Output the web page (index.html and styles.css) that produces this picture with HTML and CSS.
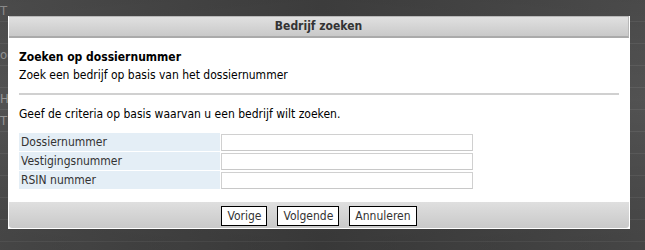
FILE: index.html
```html
<!DOCTYPE html>
<html lang="nl">
<head>
    <meta charset="UTF-8">
    <meta name="viewport" content="width=device-width, initial-scale=1.0">
    <title>Bedrijf zoeken</title>
    <link rel="stylesheet" href="styles.css">
</head>

<body>
    <div class="page">
        <div class="pagerow">T</div>
        <div class="pagerow"></div>
        <div class="pagerow">og</div>
        <div class="pagerow"></div>
        <div class="pagerow">H</div>
        <div class="pagerow">T</div>
        <div class="pagerow"></div>
        <div class="pagerow"></div>
        <div class="pagerow"></div>
        <div class="pagerow"></div>
        <div class="pagerow"></div>
    </div>
    <div class="overlay"></div>

    <div class="dialog">
        <div class="dialog-title">Bedrijf zoeken</div>
        <div class="dialog-body">
            <div class="step-title">Zoeken op dossiernummer</div>
            <div class="step-sub">Zoek een bedrijf op basis van het dossiernummer</div>
            <hr class="sep">
            <p class="intro">Geef de criteria op basis waarvan u een bedrijf wilt zoeken.</p>
            <table class="criteria">
                <tr>
                    <td class="lbl">Dossiernummer</td>
                    <td class="fld"><input type="text"></td>
                </tr>
                <tr>
                    <td class="lbl">Vestigingsnummer</td>
                    <td class="fld"><input type="text"></td>
                </tr>
                <tr>
                    <td class="lbl">RSIN nummer</td>
                    <td class="fld"><input type="text"></td>
                </tr>
            </table>
        </div>
        <div class="dialog-buttons">
            <button>Vorige</button>
            <button>Volgende</button>
            <button>Annuleren</button>
        </div>
    </div>
</body>
</html>
```

FILE: styles.css
```css
html, body {
    margin: 0;
    padding: 0;
    height: 100%;
    overflow: hidden;
}

body {
    font-family: "DejaVu Sans Condensed", "DejaVu Sans", sans-serif;
    font-size: 12px;
    background: #4c4c4c;
}

.page {
    height: 250px;
    overflow: hidden;
}

.pagerow {
    height: 21px;
    line-height: 21px;
    border-bottom: 1px solid #5a5a5a;
    color: #9a9a9a;
    font-size: 13px;
}

.overlay {
    position: absolute;
    top: 0;
    left: 0;
    right: 0;
    bottom: 0;
    background: linear-gradient(to bottom, rgba(0, 0, 0, 0.15) 0%, rgba(0, 0, 0, 0.05) 40%, rgba(0, 0, 0, 0.2) 95%),
                linear-gradient(to right, rgba(255, 255, 255, 0.06), rgba(0, 0, 0, 0.08) 50%, rgba(255, 255, 255, 0.06));
}

.dialog {
    position: absolute;
    left: 8px;
    top: 16px;
    width: 620px;
    background: #fff;
    border: 1px solid #fff;
    border-top: none;
}

.dialog-title {
    height: 19px;
    line-height: 19px;
    text-align: center;
    font-weight: bold;
    color: #333;
    background: linear-gradient(to bottom, #e0e0e0, #c9c9c9);
    border-top: 1px solid #b8b8b8;
    border-right: 1px solid #b8b8b8;
    border-bottom: 2px solid #aaa;
}

.dialog-body {
    padding: 11px 10px 12px 10px;
    color: #000;
}

.step-title {
    font-weight: bold;
    line-height: 17px;
}

.step-sub {
    line-height: 18px;
}

.sep {
    border: none;
    border-top: 2px solid #d0d0d0;
    margin: 9px 0 0 0;
}

.intro {
    margin: 11px 0 10px 0;
    line-height: 17px;
}

.criteria {
    border-collapse: separate;
    border-spacing: 0 1px;
    margin-top: -1px;
}

.criteria td {
    padding: 0;
    height: 18px;
}

.criteria .lbl {
    width: 199px;
    padding-left: 2px;
    background: #e4eef6;
    color: #333;
}

.criteria .fld {
    padding-left: 1px;
}

.criteria input {
    display: block;
    box-sizing: border-box;
    width: 252px;
    height: 17px;
    margin: 0;
    border: 1px solid #d0d0d0;
    border-bottom-color: #c8c8c8;
    background: #fff;
    padding: 0 2px;
}

.dialog-buttons {
    height: 26px;
    display: flex;
    justify-content: center;
    align-items: center;
    gap: 10px;
    background: linear-gradient(to bottom, #dfdfdf, #c9c9c9);
    border-radius: 0 0 3px 3px;
}

.dialog-buttons button {
    font-family: "DejaVu Sans Condensed", "DejaVu Sans", sans-serif;
    font-size: 12px;
    color: #333;
    background: #fff;
    border: 1px solid #000;
    border-radius: 0;
    height: 20px;
    padding: 0 5px;
    margin-top: 1px;
}
```
